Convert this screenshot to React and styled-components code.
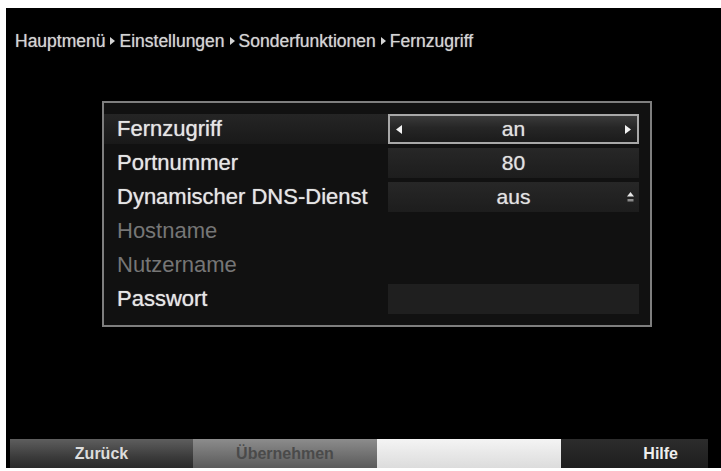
import React from 'react';
import styled, { createGlobalStyle, css } from "styled-components"

const crumbs = ["Hauptmenü", "Einstellungen", "Sonderfunktionen", "Fernzugriff"]

const rows = [
    { label: "Fernzugriff", value: "an", kind: "select", active: true },
    { label: "Portnummer", value: "80", kind: "plain" },
    { label: "Dynamischer DNS-Dienst", value: "aus", kind: "plain", updown: true },
    { label: "Hostname", dim: true },
    { label: "Nutzername", dim: true },
    { label: "Passwort", kind: "empty" },
]

const keys = [
    { text: "Zurück", tone: "dark" },
    { text: "Übernehmen", tone: "grey" },
    { text: "", tone: "light" },
    { text: "Hilfe", tone: "black" },
]

const App = () => (
<>
    <Global/>
    <Screen>
        <Crumbs>
            {crumbs.map((c, i) => (
                <React.Fragment key={c}>
                    {i > 0 && <Sep/>}
                    <span>{c}</span>
                </React.Fragment>
            ))}
        </Crumbs>

        <Panel>
            {rows.map(r => (
                <Row key={r.label}>
                    <Label dim={r.dim} active={r.active}>{r.label}</Label>
                    {r.kind && (
                        <Value kind={r.kind}>
                            <Side>{r.kind === "select" && <Arrow dir="left"/>}</Side>
                            <span>{r.value}</span>
                            <Side>
                                {r.kind === "select" && <Arrow dir="right"/>}
                                {r.updown && <UpDown/>}
                            </Side>
                        </Value>
                    )}
                </Row>
            ))}
        </Panel>

        <KeyBar>
            {keys.map((k, i) => (
                <Key key={i} tone={k.tone}>{k.text}</Key>
            ))}
        </KeyBar>
    </Screen>
</>
)

const Arrow = ({ dir }) => (
    <svg width="6" height="9" viewBox="0 0 6 9">
        {dir === "left"
            ? <path d="M6 0 L0 4.5 L6 9 Z" fill="#f2f2f2"/>
            : <path d="M0 0 L6 4.5 L0 9 Z" fill="#f2f2f2"/>}
    </svg>
)

const UpDown = () => (
    <svg width="7" height="11" viewBox="0 0 7 11">
        <path d="M3.5 0 L7 4.5 L0 4.5 Z" fill="#e6e6e6"/>
        <rect x="0.5" y="7" width="6" height="2.5" fill="#8a8a8a"/>
    </svg>
)

const Global = createGlobalStyle`
body {
    margin: 0;
    background: #fff;
    font-family: "Liberation Sans", Arial, sans-serif;
}
`

const Screen = styled.div`
margin: 8px 0 0 6px;
width: 715px;
height: 460px;
background: #000;
display: flex;
flex-direction: column;
`

const Crumbs = styled.div`
padding: 24px 0 0 9px;
height: 18px;
display: flex;
align-items: center;
font-size: 17.5px;
line-height: 18px;
color: #d4d4d4;
text-shadow: 0 0 1px rgba(255, 255, 255, 0.6);
`

const Sep = styled.span`
width: 0;
height: 0;
margin: 0 4px 0 5px;
border-left: 5px solid #d4d4d4;
border-top: 4px solid transparent;
border-bottom: 4px solid transparent;
`

const Panel = styled.div`
margin: 51px 0 0 96px;
width: 550px;
box-sizing: border-box;
border: 2px solid #7e7e7e;
background: #111;
padding: 11px 11px 11px 0;
display: flex;
flex-direction: column;
gap: 4px;
`

const Row = styled.div`
display: grid;
grid-template-columns: 1fr 251px;
height: 30px;
`

const Label = styled.div`
padding-left: 13px;
display: flex;
align-items: center;
font-size: 22px;
color: ${p => p.dim ? "#767676" : "#e6e6e6"};
text-shadow: ${p => p.dim ? "none" : "0 0 1px rgba(255, 255, 255, 0.7)"};
${p => p.active && css`
    background: linear-gradient(#252525, #191919);
`}
`

const Value = styled.div`
box-sizing: border-box;
display: grid;
grid-template-columns: 18px 1fr 18px;
align-items: center;
text-align: center;
font-size: 21px;
color: #e2e2e2;
text-shadow: 0 0 1px rgba(255, 255, 255, 0.6);
${p => p.kind === "select" && css`
    border: 2px solid #a8a8a8;
    background: linear-gradient(#3a3a3a, #262626 45%, #1b1b1b);
`}
${p => p.kind === "plain" && css`
    background: linear-gradient(#272727, #1d1d1d);
`}
${p => p.kind === "empty" && css`
    background: #1f1f1f;
`}
`

const Side = styled.div`
display: flex;
align-items: center;
justify-content: center;
`

const KeyBar = styled.div`
margin: auto 13px 0 4px;
height: 29px;
display: grid;
grid-template-columns: 183px 184px 184px 1fr;
`

const tones = {
    dark: css`
        background: linear-gradient(#5e5e5e, #3c3c3c 60%, #2a2a2a);
        color: #dcdcdc;
    `,
    grey: css`
        background: linear-gradient(#8c8c8c, #6e6e6e 60%, #5a5a5a);
        color: #4a4a4a;
    `,
    light: css`
        background: linear-gradient(#f4f4f4, #dcdcdc);
    `,
    black: css`
        background: linear-gradient(#2c2c2c, #1e1e1e);
        color: #eeeeee;
        justify-content: flex-end;
        padding-right: 30px;
    `,
}

const Key = styled.div`
display: flex;
align-items: center;
justify-content: center;
font-size: 16px;
font-weight: bold;
${p => tones[p.tone]}
`

export default App
